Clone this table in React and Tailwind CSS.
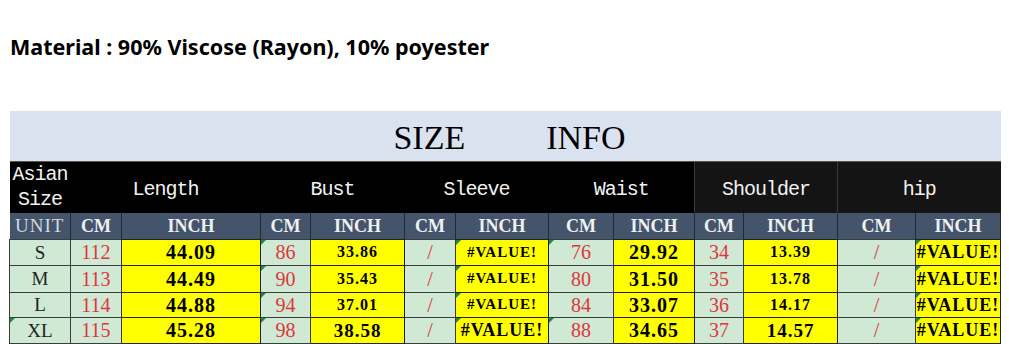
import React from 'react';

const serif = "font-['Liberation_Serif',serif]";
const mono = "font-['Liberation_Mono',monospace]";

// size / unit columns, each pair is CM then INCH
const rows = [
  { size: 'S', vals: ['112', '44.09', '86', '33.86', '/', '#VALUE!', '76', '29.92', '34', '13.39', '/', '#VALUE!'], h: 'h-[26px]' },
  { size: 'M', vals: ['113', '44.49', '90', '35.43', '/', '#VALUE!', '80', '31.50', '35', '13.78', '/', '#VALUE!'], h: 'h-[27px]' },
  { size: 'L', vals: ['114', '44.88', '94', '37.01', '/', '#VALUE!', '84', '33.07', '36', '14.17', '/', '#VALUE!'], h: 'h-[25px]' },
  { size: 'XL', vals: ['115', '45.28', '98', '38.58', '/', '#VALUE!', '88', '34.65', '37', '14.57', '/', '#VALUE!'], h: 'h-[26px]', big: true },
];

// text size of the INCH columns (normal rows, last row)
const inchSize = [
  ['text-[20px]', 'text-[20px]'],
  ['text-[16px]', 'text-[19px]'],
  ['text-[15px]', 'text-[18px]'],
  ['text-[20px]', 'text-[20px]'],
  ['text-[16px]', 'text-[19px]'],
  ['text-[18px]', 'text-[18px]'],
];

// cells that carry the little green excel marker
const marked = {
  S: [2, 5, 6, 11],
  M: [2, 5, 11],
  L: [2, 5, 11],
  XL: [-1, 2, 5, 6, 11],
};

const Marker = () => (
  <span className="absolute left-0 top-0 w-0 h-0 border-t-[5px] border-r-[5px] border-t-[#1f8a3c] border-r-transparent" />
);

const headers = ['Length', 'Bust', 'Sleeve', 'Waist', 'Shoulder', 'hip'];
const widths = ['w-[61px]', 'w-[51px]', 'w-[139px]', 'w-[50px]', 'w-[94px]', 'w-[51px]', 'w-[93px]', 'w-[65px]', 'w-[81px]', 'w-[49px]', 'w-[94px]', 'w-[78px]', 'w-[85px]'];

export default function App() {
  return (
    <div className="w-[1009px] h-[344px] bg-white overflow-hidden">
      <div className="pt-[36px] pl-[10px] h-[111px] font-['Noto_Sans',sans-serif] font-bold text-[21.5px] text-black leading-none">
        Material : 90% Viscose (Rayon), 10% poyester
      </div>

      <table className="ml-[9px] w-[991px] table-fixed border-collapse leading-none">
        <colgroup>
          {widths.map((w, i) => (
            <col key={i} className={w} />
          ))}
        </colgroup>
        <tbody>
          {/* title band */}
          <tr className="h-[50px]">
            <td colSpan={13} className="bg-[#dae2f0] border-b border-[#555]">
              <div className={`flex justify-center gap-[81px] pt-[5px] pl-[9px] text-[34px] text-black leading-none ${serif}`}>
                <span>SIZE</span>
                <span>INFO</span>
              </div>
            </td>
          </tr>

          {/* measurement names */}
          <tr className={`h-[52px] text-[20px] tracking-[-1px] text-[#f2f2f2] ${mono}`}>
            <td className="bg-black text-center leading-[25px] align-middle">
              Asian<br />Size
            </td>
            {headers.map((h, i) => (
              <td
                key={h}
                colSpan={2}
                className={`text-center pt-[5px] ${i >= 4 ? 'bg-[#141414] border-l border-[#3a3a3a]' : 'bg-black'}`}
              >
                {h}
              </td>
            ))}
          </tr>

          {/* units */}
          <tr className={`h-[26px] bg-[#44546a] ${serif}`}>
            <td className="text-center text-[19px] text-[#d4d8e0] tracking-[1px] border-r border-[#1f2a38]">UNIT</td>
            {headers.map((h) => (
              <React.Fragment key={h}>
                <td className="text-center text-[18px] font-bold text-[#eef0f4] border-r border-[#1f2a38]">CM</td>
                <td className="text-center text-[18px] font-bold text-[#eef0f4] border-r border-[#1f2a38]">INCH</td>
              </React.Fragment>
            ))}
          </tr>

          {/* sizes */}
          {rows.map((r) => (
            <tr key={r.size} className={r.h}>
              <td className={`relative bg-[#cfe9d5] border border-[#3c3c3c] text-center text-[19px] text-[#222] ${serif}`}>
                {marked[r.size].includes(-1) && <Marker />}
                {r.size}
              </td>
              {r.vals.map((v, i) => {
                const isInch = i % 2 === 1;
                const mark = marked[r.size].includes(i) && <Marker />;
                if (!isInch) {
                  return (
                    <td
                      key={i}
                      className={`relative bg-[#cfe9d5] border border-[#3c3c3c] text-center text-[20px] text-[#e0353a] ${serif}`}
                    >
                      {mark}
                      {v}
                    </td>
                  );
                }
                const sz = inchSize[(i - 1) / 2][r.big ? 1 : 0];
                return (
                  <td
                    key={i}
                    className={`relative bg-[#ffff00] border border-[#222] text-center font-bold text-black tracking-[1px] ${sz} ${serif}`}
                  >
                    {mark}
                    {v}
                  </td>
                );
              })}
            </tr>
          ))}
        </tbody>
      </table>
    </div>
  );
}
